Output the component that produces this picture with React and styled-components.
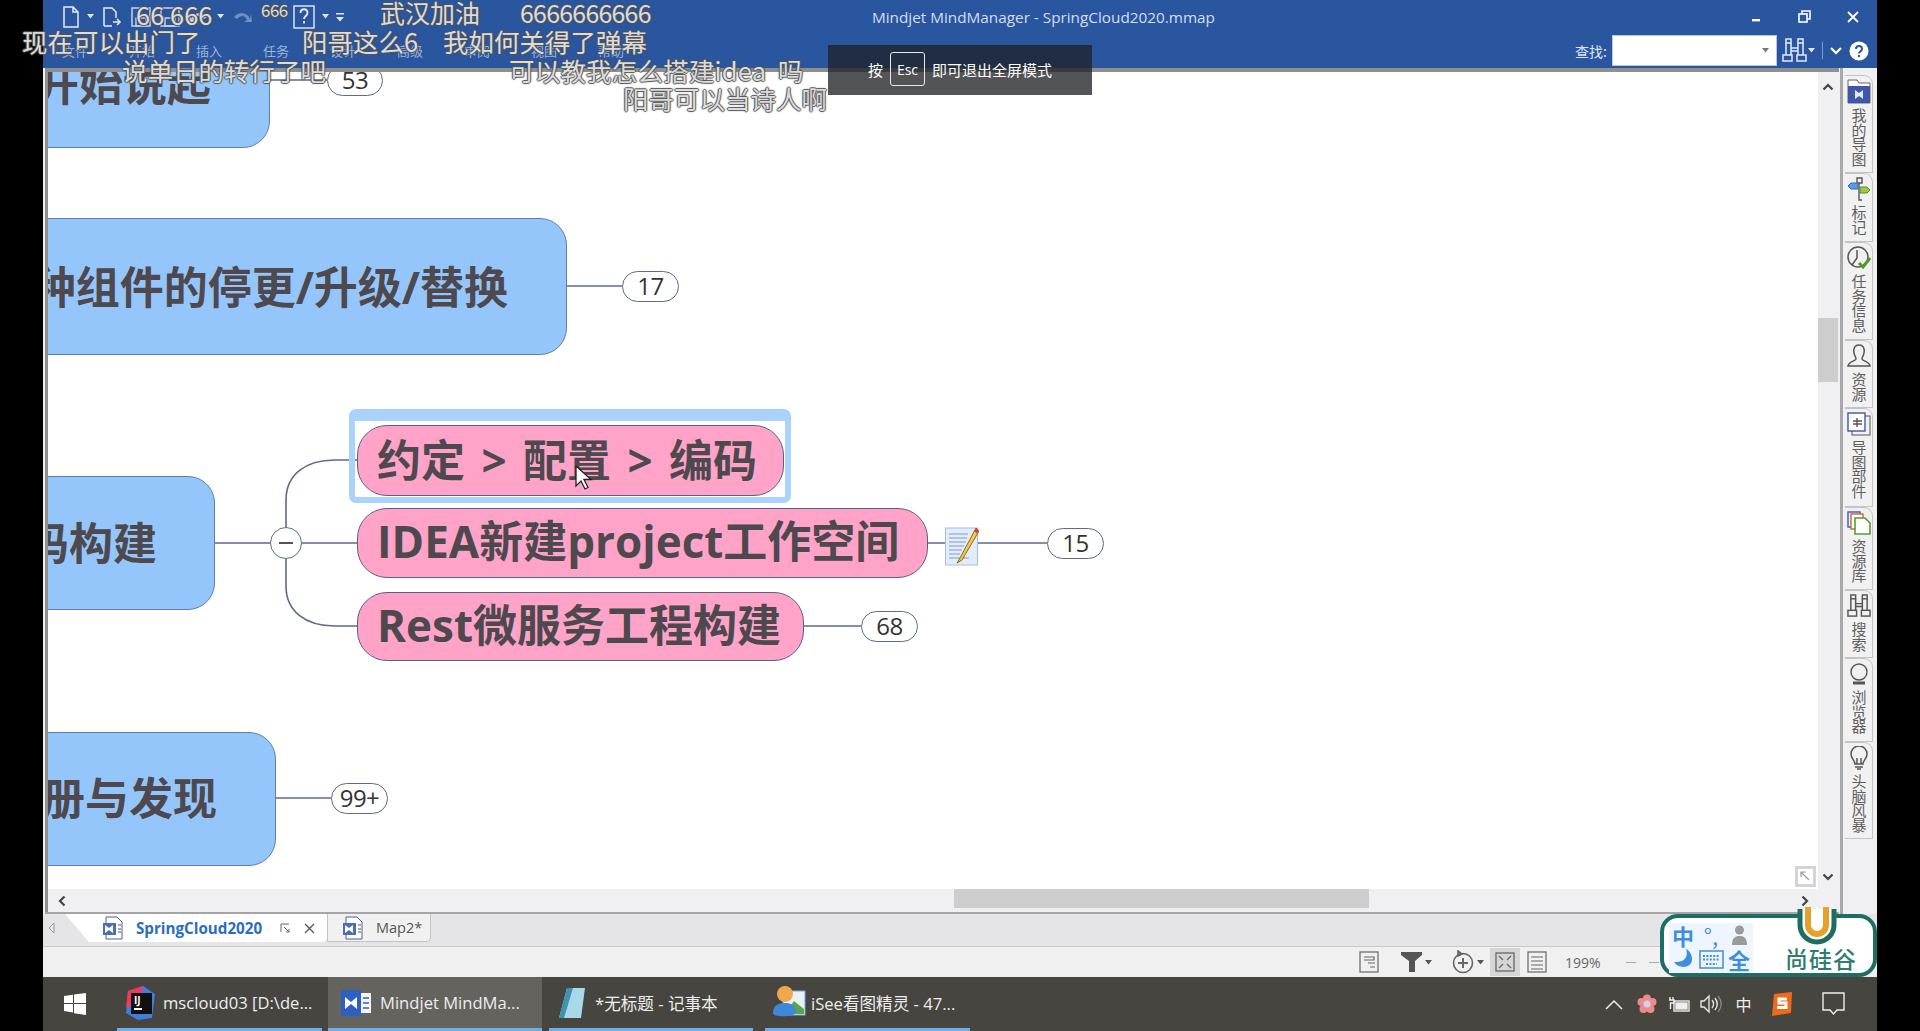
import React from "react";
import styled, { createGlobalStyle } from "styled-components";

const CJK = `"Noto Sans CJK SC", "Open Sans", sans-serif`;
const LATIN = `"Open Sans", "Noto Sans CJK SC", sans-serif`;

// the canvas starts here on the page, the map data below is in page pixels
const OX = 48;
const OY = 72;

const GlobalStyle = createGlobalStyle`
  html, body { margin: 0; padding: 0; background: #000; overflow: hidden; }
  * { box-sizing: border-box; }
`;

const Page = styled.div`
  position: relative;
  width: 1920px;
  height: 1031px;
  background: #000;
  padding-left: 43px;
  overflow: hidden;
  font-family: ${LATIN};
`;

const Window = styled.div`
  width: 1834px;
  height: 1031px;
  display: flex;
  flex-direction: column;
  background: #f0f0f2;
`;

const Spacer = styled.span`
  flex: none;
  width: ${(p) => p.$w}px;
`;

/* ---------- title bar ---------- */
const TitleBar = styled.header`
  height: 68px;
  flex: none;
  background: #2a569f;
  color: #dfe7f3;
`;
const TitleRow = styled.div`
  height: 33px;
  display: grid;
  grid-template-columns: 829px 1fr auto;
  align-items: center;
`;
const QuickBar = styled.div`
  display: flex;
  align-items: center;
  gap: 7px;
  padding-left: 19px;
`;
const Title = styled.div`
  font-size: 15.3px;
  color: #d3def0;
  white-space: nowrap;
`;
const WinControls = styled.div`
  display: flex;
  align-items: center;
  gap: 36px;
  padding-right: 18px;
`;
const RibbonRow = styled.div`
  height: 35px;
  display: flex;
  align-items: center;
  justify-content: space-between;
  padding: 0 8px 0 19px;
`;
const RibbonTabs = styled.nav`
  display: flex;
  gap: 40px;
`;
const RibbonTab = styled.span`
  width: 27px;
  font: 13px ${CJK};
  white-space: nowrap;
  color: #9db4d8;
`;
const SearchArea = styled.div`
  display: flex;
  align-items: center;
  gap: 5px;
`;
const SearchLabel = styled.span`
  font: 14px ${CJK};
  color: #dfe7f3;
`;
const SearchBox = styled.div`
  width: 165px;
  height: 31px;
  background: #fff;
  border: 1px solid #b9c8df;
  display: flex;
  align-items: center;
  justify-content: flex-end;
  padding-right: 7px;
`;
const SearchTools = styled.div`
  display: flex;
  align-items: center;
  gap: 7px;
`;
const FindGroup = styled.div`
  display: flex;
  align-items: center;
  gap: 1px;
`;
const Divider = styled.span`
  width: 1px;
  height: 17px;
  background: #7f9ac6;
`;

/* ---------- main area ---------- */
const Main = styled.div`
  flex: 1;
  min-height: 0;
  display: flex;
`;
const Workspace = styled.div`
  flex: 1;
  min-width: 0;
  display: flex;
  flex-direction: column;
  margin-left: 2px;
  border-top: 4px solid #8f8f8f;
  border-bottom: 2px solid #a5a5a5;
`;
const WorkRow = styled.div`
  flex: 1;
  min-height: 0;
  display: flex;
`;
const Canvas = styled.div`
  position: relative;
  width: 1773px;
  overflow: hidden;
  background: #fff;
  border-left: 3px solid #8f8f8f;
  font-family: ${CJK};
`;
const Links = styled.svg`
  position: absolute;
  left: 0;
  top: 0;
`;
const MapNode = styled.div`
  position: absolute;
  left: ${(p) => p.$x - OX}px;
  top: ${(p) => p.$y - OY}px;
  width: ${(p) => p.$w}px;
  height: ${(p) => p.$h}px;
  display: flex;
  align-items: center;
  white-space: nowrap;
  font-family: ${LATIN};
  font-weight: 700;
  font-size: 44px;
  color: #4e494e;
  justify-content: ${(p) => (p.$pink ? "flex-start" : "flex-end")};
  padding: ${(p) => (p.$pink ? "0 0 0 19px" : `0 ${p.$pad}px 0 0`)};
  background: ${(p) => (p.$pink ? "#ffa3c9" : "#94c6fc")};
  border: 1.5px solid ${(p) => (p.$pink ? "#5d5f88" : "#5d7fb0")};
  border-radius: ${(p) => (p.$pink ? "30px" : "27px")};
`;
const NodeText = styled.span`
  word-spacing: ${(p) => p.$ws || 0}px;
  position: relative;
  top: ${(p) => p.$top || 0}px;
`;
const Selection = styled.div`
  position: absolute;
  left: ${349 - OX}px;
  top: ${409 - OY}px;
  width: 442px;
  height: 94px;
  border: 6px solid #a9d3fb;
  border-top-width: 12px;
  border-radius: 7px;
`;
const CountPill = styled.div`
  position: absolute;
  left: ${(p) => p.$x - OX}px;
  top: ${(p) => p.$y - OY}px;
  width: ${(p) => p.$w}px;
  height: 31px;
  display: flex;
  align-items: center;
  justify-content: center;
  padding-bottom: 2px;
  background: #fff;
  border: 1.5px solid #5d6a8c;
  border-radius: 16px;
  font: 24px "Open Sans", sans-serif;
  letter-spacing: -0.5px;
  color: #333;
`;
const Collapse = styled.div`
  position: absolute;
  left: ${270 - OX}px;
  top: ${527 - OY}px;
  width: 32px;
  height: 32px;
  border-radius: 50%;
  background: #fff;
  border: 1.5px solid #5d6a8c;
  display: flex;
  align-items: center;
  justify-content: center;
  &::before {
    content: "";
    width: 14px;
    height: 2px;
    background: #555;
  }
`;
const CanvasIcon = styled.div`
  position: absolute;
  left: ${(p) => p.$x - OX}px;
  top: ${(p) => p.$y - OY}px;
  line-height: 0;
`;
const VScroll = styled.div`
  width: 20px;
  display: flex;
  flex-direction: column;
  align-items: center;
  justify-content: space-between;
  padding: 9px 0 6px;
  position: relative;
`;
const VThumb = styled.div`
  position: absolute;
  left: 0;
  top: 246px;
  width: 20px;
  height: 64px;
  background: #cdcdcd;
`;
const CornerBox = styled.div`
  position: absolute;
  left: ${1795 - OX}px;
  top: ${866 - OY}px;
  width: 21px;
  height: 21px;
  background: #fff;
  border: 3px solid #d4d4d4;
  display: flex;
  align-items: center;
  justify-content: center;
`;
const HScroll = styled.div`
  position: relative;
  height: 23px;
  flex: none;
  display: flex;
  align-items: center;
  justify-content: space-between;
  padding: 0 28px 0 8px;
  border-left: 3px solid #8f8f8f;
`;
const HThumb = styled.div`
  position: absolute;
  left: 906px;
  top: 0;
  width: 415px;
  height: 19px;
  background: #cdcdcd;
`;
const ArrowSvg = styled.svg`
  transform: rotate(${(p) => p.$turn}deg);
`;

/* ---------- right hand panel tabs ---------- */
const Sidebar = styled.aside`
  width: 37px;
  flex: none;
  border-left: 3px solid #a8a8a8;
  margin-left: 1px;
  padding: 7px 0 0 2px;
  display: flex;
  flex-direction: column;
`;
const SideTab = styled.div`
  width: 28px;
  height: ${(p) => p.$h}px;
  display: flex;
  flex-direction: column;
  align-items: center;
  gap: 4px;
  padding-top: 3px;
  border: 1px solid #c4c4c4;
  border-left: none;
  border-top-right-radius: 9px;
  background: #f1f1f2;
`;
const SideLabel = styled.span`
  writing-mode: vertical-rl;
  text-orientation: upright;
  font: 15px/18px ${CJK};
  letter-spacing: -0.5px;
  color: #5f5f5f;
`;

/* ---------- document tabs and status bar ---------- */
const DocTabs = styled.div`
  height: 33px;
  flex: none;
  display: flex;
  align-items: flex-start;
  background: #e5e5e7;
  border-bottom: 1px solid #c9c9c9;
  padding-left: 5px;
`;
const TabArrow = styled.div`
  width: 17px;
  height: 27px;
  display: flex;
  align-items: center;
`;
const DocTab = styled.div`
  display: flex;
  align-items: center;
  height: 28px;
  width: ${(p) => p.$w}px;
  padding-left: ${(p) => p.$pad}px;
  gap: 12px;
  background: ${(p) => (p.$active ? "#fff" : "#f1f1f1")};
  border: ${(p) => (p.$active ? "none" : "1px solid #c4c4c4")};
  border-top: none;
  border-bottom-right-radius: 5px;
  clip-path: ${(p) => (p.$active ? "polygon(0 0, 100% 0, 100% 100%, 24px 100%)" : "none")};
`;
const DocName = styled.span`
  font-size: ${(p) => (p.$active ? 15.2 : 14.5)}px;
  font-weight: ${(p) => (p.$active ? 700 : 400)};
  color: ${(p) => (p.$active ? "#2b6cc4" : "#555")};
  white-space: nowrap;
`;
const TabActions = styled.div`
  display: flex;
  align-items: center;
  gap: 14px;
  margin-left: 6px;
`;
const StatusBar = styled.div`
  height: 30px;
  flex: none;
  display: flex;
  align-items: center;
  background: #f0f0f0;
  padding-left: 1316px;
  gap: 3px;
`;
const StatusButton = styled.div`
  height: 28px;
  width: ${(p) => p.$w || 30}px;
  display: flex;
  align-items: center;
  justify-content: center;
  background: ${(p) => (p.$on ? "#d6d6d6" : "transparent")};
`;
const ZoomLevel = styled.span`
  font-size: 14px;
  color: #666;
  margin-left: 15px;
`;
const ZoomDash = styled.span`
  width: 10px;
  height: 1px;
  background: #aaa;
  margin-left: ${(p) => p.$ml}px;
`;

/* ---------- windows taskbar ---------- */
const Taskbar = styled.footer`
  height: 54px;
  flex: none;
  display: flex;
  align-items: stretch;
  background: #46453f;
  color: #eee;
`;
const StartButton = styled.div`
  width: 64px;
  margin-right: 10px;
  display: flex;
  align-items: center;
  justify-content: center;
`;
const TaskItem = styled.div`
  width: ${(p) => p.$w}px;
  margin-right: ${(p) => p.$gap}px;
  display: flex;
  align-items: center;
  gap: ${(p) => p.$iconGap}px;
  padding-left: ${(p) => p.$pad}px;
  background: ${(p) => (p.$active ? "#64635d" : "transparent")};
  border-bottom: 3px solid #6db0e6;
  font: 16.6px ${LATIN};
  white-space: nowrap;
`;
const Tray = styled.div`
  margin-left: auto;
  display: flex;
  align-items: center;
  padding-right: 15px;
  font: 16px ${CJK};
`;
const TraySlot = styled.div`
  width: ${(p) => p.$w}px;
  display: flex;
  align-items: center;
  justify-content: center;
`;

/* ---------- overlays ---------- */
const Danmaku = styled.div`
  position: absolute;
  left: ${(p) => p.$x}px;
  top: ${(p) => p.$y}px;
  transform: translateY(-50%);
  font: ${(p) => p.$size || 25.5}px/1.2 ${CJK};
  letter-spacing: ${(p) => p.$ls || 0}px;
  white-space: pre;
  color: rgba(240, 240, 240, 0.88);
  text-shadow: 1px 0 1px #555, -1px 0 1px #555, 0 1px 1px #555, 0 -1px 1px #555;
  pointer-events: none;
`;
const EscHint = styled.div`
  position: absolute;
  left: 828px;
  top: 45px;
  width: 264px;
  height: 50px;
  background: rgba(30, 32, 38, 0.77);
  color: #fff;
  display: flex;
  align-items: center;
  gap: 7px;
  padding: 0 0 2px 40px;
  font: 15px ${CJK};
`;
const EscKey = styled.span`
  width: 35px;
  height: 34px;
  border: 1px solid #e8e8e8;
  border-radius: 3px;
  display: flex;
  align-items: center;
  justify-content: center;
  font: 14px "Open Sans", sans-serif;
`;
const Badge = styled.div`
  position: absolute;
  left: 1660px;
  top: 914px;
  width: 217px;
  height: 63px;
  background: #fff;
  border: 4px solid #1d6d63;
  border-radius: 18px;
  display: flex;
  justify-content: space-between;
  padding: 5px 16px 0 5px;
`;
const ImeGrid = styled.div`
  display: grid;
  grid-template-columns: repeat(3, 28px);
  grid-auto-rows: 24px;
  align-items: center;
  justify-items: center;
  font: 700 22px/24px ${CJK};
  color: #3e8edb;
  background: #eef5fd;
  height: 50px;
`;
const ImeMark = styled.span`
  font-weight: 400;
`;
const BrandName = styled.span`
  align-self: flex-end;
  font: 500 23px/30px ${CJK};
  letter-spacing: 1px;
  color: #2f7d6e;
`;
const BadgeClip = styled.svg`
  position: absolute;
  left: 132px;
  top: -13px;
`;

/* ---------- drawn icons ---------- */
const Caret = ({ c = "#dfe7f3" }) => (
  <svg width="7" height="5" viewBox="0 0 7 5"><path d="M0 0h7L3.5 4.5z" fill={c} /></svg>
);
const Chevron = ({ dir = "up" }) => (
  <ArrowSvg $turn={{ up: 0, right: 90, down: 180, left: 270 }[dir]} width="12" height="12" viewBox="0 0 12 12">
    <path d="M1.5 8.5 6 4l4.5 4.5" fill="none" stroke="#444" strokeWidth="2.2" />
  </ArrowSvg>
);
const NewDoc = () => (
  <svg width="18" height="22" viewBox="0 0 18 22" fill="none" stroke="#e6ecf6" strokeWidth="1.5">
    <path d="M2 1h9l5 5v15H2zM11 1v5h5" />
  </svg>
);
const OpenDoc = () => (
  <svg width="22" height="22" viewBox="0 0 22 22" fill="none" stroke="#e6ecf6" strokeWidth="1.5">
    <path d="M3 20V2h8l4 4v6M3 20h8" /><path d="M12 16h7m-3-3 3 3-3 3" />
  </svg>
);
const SaveDoc = () => (
  <svg width="22" height="22" viewBox="0 0 22 22" fill="none" stroke="#c8d4e8" strokeWidth="1.5">
    <rect x="2" y="2" width="18" height="18" /><rect x="6" y="12" width="10" height="8" />
  </svg>
);
const Undo = () => (
  <svg width="22" height="16" viewBox="0 0 22 16">
    <path d="M3 10C6 3 14 2 19 8l-3 2C12 6 8 6 6 11l3 2H1l1-8z" fill="#c8d4e8" />
  </svg>
);
const Redo = () => (
  <svg width="22" height="16" viewBox="0 0 22 16">
    <path d="M19 10C16 3 8 2 3 8l3 2c4-4 8-4 10 1l-3 2h8l-1-8z" fill="#6f8fc2" />
  </svg>
);
const HelpBox = () => (
  <svg width="22" height="24" viewBox="0 0 22 24" fill="none" stroke="#e6ecf6" strokeWidth="1.4">
    <rect x="1" y="1" width="20" height="22" />
    <path d="M7.5 8c0-5 7-5 7 0 0 3-3.5 3-3.5 6M11 16v2.5" strokeWidth="1.8" />
  </svg>
);
const Overflow = () => (
  <svg width="8" height="10" viewBox="0 0 8 10"><path d="M0 1h8v1.4H0zM0 5h8L4 9.5z" fill="#dfe7f3" /></svg>
);
const Binoculars = ({ c = "#e6ecf6", w = 25 }) => (
  <svg width={w} height={w} viewBox="0 0 25 25" fill="none" stroke={c} strokeWidth="1.5">
    <rect x="4" y="1" width="5" height="4" /><rect x="16" y="1" width="5" height="4" />
    <path d="M4 5v12M9 5v12M16 5v12M21 5v12M9 10h7M9 13h7" />
    <rect x="1" y="17" width="9" height="6" /><rect x="15" y="17" width="9" height="6" />
  </svg>
);
const WinMin = () => <svg width="12" height="12" viewBox="0 0 12 12"><rect x="2" y="8" width="8" height="2.4" fill="#fff" /></svg>;
const WinRestore = () => (
  <svg width="13" height="13" viewBox="0 0 13 13" fill="none" stroke="#fff" strokeWidth="1.6">
    <rect x="1" y="4" width="8" height="8" /><path d="M4 4V1h8v8H9" />
  </svg>
);
const WinClose = () => (
  <svg width="12" height="12" viewBox="0 0 12 12" stroke="#fff" strokeWidth="1.8"><path d="m1 1 10 10M11 1 1 11" /></svg>
);
const HelpDot = () => (
  <svg width="20" height="20" viewBox="0 0 20 20">
    <circle cx="10" cy="10" r="9.5" fill="#fff" />
    <path d="M7 8c0-4 6-4 6 0 0 2.4-3 2.4-3 4.6" fill="none" stroke="#2a569f" strokeWidth="2" />
    <rect x="9" y="14" width="2" height="2" fill="#2a569f" />
  </svg>
);
const NoteIcon = () => (
  <svg width="34" height="41" viewBox="0 0 34 41">
    <rect x="0.5" y="3" width="32" height="37" fill="#e2ecf8" stroke="#a8bfdc" />
    <path d="M4 9h19M4 13h18M4 17h17M4 21h15M4 25h13M4 29h11M4 33h20" stroke="#7f9cc6" strokeWidth="1" />
    <path d="M31 3 15 33l-3 5 5-3L34 6z" fill="#f5c84c" stroke="#8a6a20" strokeWidth="1" />
    <path d="M31 3l3 3 -1.5 2.5-3.4-2z" fill="#d5473d" />
  </svg>
);
const Cursor = () => (
  <svg width="18" height="25" viewBox="0 0 18 25">
    <path d="M1 1v20l5-5 4 8 3-1.5-4-8h7z" fill="#fff" stroke="#222" strokeWidth="1.3" />
  </svg>
);
const MyMapsIcon = () => (
  <svg width="24" height="25" viewBox="0 0 24 25">
    <path d="M1 24V1h9l2 3h11v20z" fill="#fff" stroke="#666" />
    <rect x="1" y="7" width="22" height="17" fill="#3f57a6" />
    <path d="M8 11l4 3 4-3v9l-4-3-4 3z" fill="#dfe7f8" />
  </svg>
);
const MarkerIcon = () => (
  <svg width="24" height="24" viewBox="0 0 24 24">
    <path d="M10 1h5v5h-5zM12 6v17h3" fill="none" stroke="#555" strokeWidth="1.4" />
    <path d="M1 9l3-3h7v6H4z" fill="#5b9be0" stroke="#2b6cc4" />
    <path d="M23 13l-3-3h-7v6h7z" fill="#9cc94c" stroke="#5c8f1e" />
  </svg>
);
const ClockIcon = () => (
  <svg width="24" height="24" viewBox="0 0 24 24" fill="none">
    <circle cx="11" cy="11" r="10" stroke="#555" strokeWidth="1.5" />
    <path d="M10 4v8L5 19" stroke="#555" strokeWidth="1.5" />
    <path d="M12 17l4 4 7-9" stroke="#4e9b2a" strokeWidth="3" />
  </svg>
);
const PersonIcon = () => (
  <svg width="24" height="24" viewBox="0 0 24 24" fill="none" stroke="#555" strokeWidth="1.5">
    <path d="M12 1c-4 0-6 3-5 8 .5 3 2 4 2 6 0 2-7 2-8 7h22c-1-5-8-5-8-7 0-2 1.500-3 2-6 1-5-1-8-5-8z" />
  </svg>
);
const PartsIcon = () => (
  <svg width="24" height="24" viewBox="0 0 24 24" fill="none">
    <rect x="5" y="4" width="18" height="19" stroke="#555" />
    <rect x="1" y="1" width="17" height="18" fill="#fff" stroke="#3f57a6" strokeWidth="1.4" />
    <path d="M6 9h9M6 12h9M10 6v9" stroke="#555" strokeWidth="1.4" />
  </svg>
);
const LibraryIcon = () => (
  <svg width="24" height="24" viewBox="0 0 24 24" fill="none">
    <rect x="1" y="1" width="12" height="15" stroke="#2b5fb8" strokeWidth="1.4" />
    <rect x="4" y="3" width="12" height="15" fill="#fff" stroke="#d5603a" strokeWidth="1.4" />
    <path d="M8 7h10l5 5v11H8z" fill="#fff" stroke="#5c9b2e" strokeWidth="1.6" />
  </svg>
);
const BrowserIcon = () => (
  <svg width="24" height="24" viewBox="0 0 24 24" fill="none" stroke="#555" strokeWidth="1.4">
    <circle cx="12" cy="10" r="8" /><path d="M6 21h12" strokeWidth="3" />
  </svg>
);
const BulbIcon = () => (
  <svg width="24" height="24" viewBox="0 0 24 24" fill="none" stroke="#555" strokeWidth="1.5">
    <path d="M8 18c0-4-4-5-4-10a8 8 0 0 1 16 0c0 5-4 6-4 10z" /><path d="M8 21h8M10 23h4M10 18v-6M14 18v-6" />
  </svg>
);
const MapFile = () => (
  <svg width="22" height="24" viewBox="0 0 22 24">
    <path d="M4 1h11l5 5v17H4z" fill="#fff" stroke="#4a5f92" />
    <rect x="1" y="7" width="13" height="12" fill="#4a6fb8" />
    <path d="M3 9l4 3 4-3v8l-4-3-4 3z" fill="#fff" />
    <path d="M16 9h3M16 13h3M16 16h3" stroke="#555" />
  </svg>
);
const Popout = () => (
  <svg width="10" height="10" viewBox="0 0 10 10" fill="none" stroke="#666"><path d="M1 9V1h8M4 4l5 5M6 9h3V6" /></svg>
);
const CloseX = () => (
  <svg width="11" height="11" viewBox="0 0 11 11" stroke="#555" strokeWidth="1.3"><path d="m1 1 9 9M10 1l-9 9" /></svg>
);
const OutlineIcon = ({ filter }) => (
  <svg width="20" height="22" viewBox="0 0 20 22" fill="none" stroke="#666" strokeWidth="1.2">
    <rect x="1" y="1" width="18" height="20" />
    {filter ? <path d="M4 6h12M4 10h12M4 14h12M4 18h12" /> : <path d="M5 6h10v3H5M9 12h7M11 16h5" />}
  </svg>
);
const FilterIcon = () => (
  <svg width="21" height="20" viewBox="0 0 21 20"><path d="M0 0h21v3l-7 6v11H8V9L0 3z" fill="#555" /></svg>
);
const AddCircle = () => (
  <svg width="22" height="24" viewBox="0 0 22 24" fill="none" stroke="#666" strokeWidth="1.6">
    <circle cx="11" cy="13" r="9.500" /><path d="M11 8v10M6 13h10" strokeWidth="2" /><path d="M6 1l4 3-4 2z" fill="#666" />
  </svg>
);
const FitIcon = () => (
  <svg width="20" height="20" viewBox="0 0 20 20" fill="none" stroke="#666" strokeWidth="1.3">
    <rect x="1" y="1" width="18" height="18" /><path d="m4 4 4 4M16 4l-4 4M4 16l4-4M16 16l-4-4" />
  </svg>
);
const WinLogo = () => (
  <svg width="22" height="22" viewBox="0 0 22 22" fill="#fff">
    <path d="M0 3l9-1.300V10H0zM10 1.500 22 0v10H10zM0 11h9v8.400L0 18zM10 11h12v11l-12-1.700z" />
  </svg>
);
const IdeaIcon = () => (
  <svg width="33" height="36" viewBox="0 0 33 36">
    <path d="M3 6 18 1l12 8-3 24-14 2L1 28z" fill="#3f7fe0" />
    <path d="M3 6 18 1 14 20 1 22z" fill="#f0385f" />
    <rect x="6" y="8" width="21" height="21" fill="#111" />
    <text x="9" y="19" fill="#fff" fontSize="10" fontWeight="700" fontFamily="Open Sans">IJ</text>
    <rect x="9" y="23" width="8" height="2" fill="#fff" />
  </svg>
);
const MindIcon = () => (
  <svg width="31" height="30" viewBox="0 0 31 30">
    <rect x="0" y="2" width="20" height="26" fill="#2f5fc0" />
    <path d="M4 9l6 5 6-5v12l-6-5-6 5z" fill="#fff" />
    <rect x="20" y="5" width="10" height="20" fill="#f4f4f4" />
    <path d="M22 10h6M22 15h6M22 20h6" stroke="#2f5fc0" strokeWidth="1.500" />
  </svg>
);
const NotepadIcon = () => (
  <svg width="28" height="32" viewBox="0 0 28 32">
    <path d="M9 1h18l-4 30H1z" fill="#a9d8e8" />
    <path d="M9 1h6L6 31H1z" fill="#3f93ad" />
  </svg>
);
const PhotoIcon = () => (
  <svg width="33" height="36" viewBox="0 0 33 36">
    <rect x="10" y="6" width="22" height="24" fill="#e8f1fb" stroke="#7fa8d5" />
    <path d="M13 27l8-11 10 8v5H13z" fill="#57a845" />
    <circle cx="12" cy="9" r="8" fill="#f0a84c" />
    <path d="M0 28c0-8 6-10 12-10s11 2 11 9c0 5-23 6-23 1z" fill="#3f87d8" />
  </svg>
);
const Flower = () => (
  <svg width="20" height="20" viewBox="0 0 20 20">
    <g fill="#f08a8a">
      <circle cx="10" cy="4.500" r="4" /><circle cx="15.500" cy="8" r="4" /><circle cx="13.500" cy="15" r="4" />
      <circle cx="6.500" cy="15" r="4" /><circle cx="4.500" cy="8" r="4" />
    </g>
    <circle cx="10" cy="10" r="3.500" fill="#c9d6ef" />
  </svg>
);
const PowerIcon = () => (
  <svg width="23" height="17" viewBox="0 0 23 17" fill="none" stroke="#eee" strokeWidth="1.4">
    <rect x="6" y="5" width="15" height="10" /><rect x="8" y="7" width="11" height="6" fill="#eee" />
    <path d="M2 1v3M5 1v3M1 4h5v3H2.500v6" />
  </svg>
);
const Speaker = () => (
  <svg width="23" height="20" viewBox="0 0 23 20" fill="none" stroke="#eee" strokeWidth="1.300">
    <path d="M1 7h3l5-5v16l-5-5H1z" /><path d="M12 6c2 2.500 2 5.500 0 8M15 4c3 4 3 8 0 12" /><path d="M18 2c4 5 4 11 0 16" stroke="#8a8a85" />
  </svg>
);
const SogouIcon = () => (
  <svg width="22" height="24" viewBox="0 0 22 24">
    <path d="M3 2 21 0l-1 21-19 3z" fill="#f06a1c" />
    <path d="M16 7H8v4h7v4.500H6" fill="none" stroke="#fff" strokeWidth="3" />
  </svg>
);
const Notify = () => (
  <svg width="23" height="24" viewBox="0 0 23 24" fill="none" stroke="#eee" strokeWidth="1.400">
    <path d="M1 1h21v17h-7l-3.500 4L8 18H1z" />
  </svg>
);
const TrayUp = () => (
  <svg width="18" height="11" viewBox="0 0 18 11" fill="none" stroke="#eee" strokeWidth="1.500"><path d="m1 10 8-8 8 8" /></svg>
);
const Moon = () => (
  <svg width="20" height="22" viewBox="0 0 20 22"><path d="M13 1c3 8-2 14-12 13 4 7 18 7 18-3 0-4-2-8-6-10z" fill="#3e8edb" /></svg>
);
const Keys = () => (
  <svg width="25" height="19" viewBox="0 0 25 19" fill="none" stroke="#3e8edb" strokeWidth="1.500">
    <rect x="1" y="1" width="23" height="17" />
    <path d="M4 6h17M4 9.500h17M7 14h11" strokeDasharray="2 1.400" strokeWidth="2" />
  </svg>
);
const ImePerson = () => (
  <svg width="15" height="20" viewBox="0 0 15 20" fill="#9a9a9a">
    <circle cx="7.500" cy="5" r="4.500" /><path d="M0 20c0-7 3-9 7.500-9S15 13 15 20z" />
  </svg>
);

const PANEL_TABS = [
  { label: "我的导图", h: 98, icon: <MyMapsIcon /> },
  { label: "标记", h: 69, icon: <MarkerIcon /> },
  { label: "任务信息", h: 98, icon: <ClockIcon /> },
  { label: "资源", h: 68, icon: <PersonIcon /> },
  { label: "导图部件", h: 99, icon: <PartsIcon /> },
  { label: "资源库", h: 83, icon: <LibraryIcon /> },
  { label: "搜索", h: 68, icon: <Binoculars c="#555" w={24} /> },
  { label: "浏览器", h: 84, icon: <BrowserIcon /> },
  { label: "头脑风暴", h: 97, icon: <BulbIcon /> },
];

const RIBBON = ["文件", "开始", "插入", "任务", "设计", "高级", "审阅", "视图", "帮助"];

const PILLS = [
  { x: 327, y: 65, w: 56, n: "53" },
  { x: 622, y: 271, w: 57, n: "17" },
  { x: 1047, y: 528, w: 57, n: "15" },
  { x: 861, y: 611, w: 57, n: "68" },
  { x: 331, y: 783, w: 57, n: "99+" },
];

const DANMAKU = [
  { x: 136, y: 14, text: "66 666", size: 25.5, ls: 0 },
  { x: 261, y: 10, text: "666", size: 17, ls: -0.5 },
  { x: 380, y: 12, text: "武汉加油", size: 25 },
  { x: 520, y: 12, text: "6666666666", size: 25, ls: -0.8 },
  { x: 22, y: 41, text: "现在可以出门了" },
  { x: 302, y: 41, text: "阳哥这么6" },
  { x: 443, y: 41, text: "我如何关得了弹幕" },
  { x: 122, y: 70, text: "说单日的转行了吧" },
  { x: 509, y: 70, text: "可以教我怎么搭建idea  吗", ls: 0.2 },
  { x: 623, y: 98, text: "阳哥可以当诗人啊" },
];

export default function App() {
  return (
    <Page>
      <GlobalStyle />
      <Window>
        <TitleBar>
          <TitleRow>
            <QuickBar>
              <NewDoc /><Caret />
              <OpenDoc />
              <SaveDoc />
              <SaveDoc />
              <Undo /><Caret />
              <Redo />
              <Spacer $w={26} />
              <HelpBox /><Caret />
              <Overflow />
            </QuickBar>
            <Title>Mindjet MindManager - SpringCloud2020.mmap</Title>
            <WinControls>
              <WinMin /><WinRestore /><WinClose />
            </WinControls>
          </TitleRow>
          <RibbonRow>
            <RibbonTabs>
              {RIBBON.map((t) => <RibbonTab key={t}>{t}</RibbonTab>)}
            </RibbonTabs>
            <SearchArea>
              <SearchLabel>查找:</SearchLabel>
              <SearchBox><Caret c="#777" /></SearchBox>
              <SearchTools>
                <FindGroup><Binoculars /><Caret /></FindGroup>
                <Divider />
                <svg width="12" height="8" viewBox="0 0 12 8" fill="none" stroke="#fff" strokeWidth="2.2"><path d="m1 1 5 5 5-5" /></svg>
                <HelpDot />
              </SearchTools>
            </SearchArea>
          </RibbonRow>
        </TitleBar>

        <Main>
          <Workspace>
            <WorkRow>
              <Canvas>
                <Links width="1770" height="817" viewBox={`${OX} ${OY} 1770 817`} fill="none" stroke="#5d6a8c" strokeWidth="1.6">
                  <path d="M270 80h57" />
                  <path d="M567 286h55" />
                  <path d="M215 543h55M302 543h55" />
                  <path d="M286 527V500C286 475 305 460 335 460H357" />
                  <path d="M286 559V586C286 611 305 626 335 626H357" />
                  <path d="M928 543h17M977 543h70" />
                  <path d="M804 626h57" />
                  <path d="M276 798h55" />
                </Links>

                <MapNode $x={-60} $y={20} $w={330} $h={128} $pad={58}>
                  <NodeText $top={-2}>开始说起</NodeText>
                </MapNode>
                <MapNode $x={-60} $y={218} $w={627} $h={137} $pad={58}>
                  <NodeText $top={-2}>种组件的停更/升级/替换</NodeText>
                </MapNode>
                <MapNode $x={-60} $y={476} $w={275} $h={134} $pad={57}>
                  <NodeText $top={-2}>码构建</NodeText>
                </MapNode>
                <MapNode $x={-60} $y={732} $w={336} $h={134} $pad={58}>
                  <NodeText $top={-3}>册与发现</NodeText>
                </MapNode>

                <Selection />
                <MapNode $pink $x={357} $y={425} $w={427} $h={71}>
                  <NodeText $top={-3} $ws={5}>约定 &gt; 配置 &gt; 编码</NodeText>
                </MapNode>
                <MapNode $pink $x={357} $y={508} $w={571} $h={70}>
                  <NodeText $top={-4}>IDEA新建project工作空间</NodeText>
                </MapNode>
                <MapNode $pink $x={357} $y={592} $w={447} $h={69}>
                  <NodeText $top={-4}>Rest微服务工程构建</NodeText>
                </MapNode>

                <Collapse />
                {PILLS.map((p) => (
                  <CountPill key={p.n} $x={p.x} $y={p.y} $w={p.w}>{p.n}</CountPill>
                ))}
                <CanvasIcon $x={945} $y={525}><NoteIcon /></CanvasIcon>
                <CanvasIcon $x={575} $y={465}><Cursor /></CanvasIcon>
                <CornerBox>
                  <svg width="11" height="11" viewBox="0 0 11 11" fill="none" stroke="#999" strokeWidth="1.2"><path d="M1 6V1h5M1 1l8 8" /></svg>
                </CornerBox>
              </Canvas>
              <VScroll>
                <VThumb />
                <Chevron />
                <Chevron dir="down" />
              </VScroll>
            </WorkRow>
            <HScroll>
              <HThumb />
              <Chevron dir="left" />
              <Chevron dir="right" />
            </HScroll>
          </Workspace>
          <Sidebar>
            {PANEL_TABS.map((t) => (
              <SideTab key={t.label} $h={t.h}>
                {t.icon}
                <SideLabel>{t.label}</SideLabel>
              </SideTab>
            ))}
          </Sidebar>
        </Main>

        <DocTabs>
          <TabArrow>
            <svg width="7" height="12" viewBox="0 0 7 12" fill="none" stroke="#999"><path d="M6 1 1 6l5 5z" /></svg>
          </TabArrow>
          <DocTab $active $w={262} $pad={37}>
            <MapFile />
            <DocName $active>SpringCloud2020</DocName>
            <TabActions><Popout /><CloseX /></TabActions>
          </DocTab>
          <DocTab $w={104} $pad={14}>
            <MapFile />
            <DocName>Map2*</DocName>
          </DocTab>
        </DocTabs>

        <StatusBar>
          <StatusButton $w={20}><OutlineIcon /></StatusButton>
          <Spacer $w={16} />
          <FilterIcon /><Caret c="#555" />
          <Spacer $w={14} />
          <AddCircle /><Caret c="#555" />
          <Spacer $w={0} />
          <StatusButton $on><FitIcon /></StatusButton>
          <Spacer $w={1} />
          <StatusButton $w={20}><OutlineIcon filter /></StatusButton>
          <ZoomLevel>199%</ZoomLevel>
          <ZoomDash $ml={22} />
          <ZoomDash $ml={10} />
        </StatusBar>

        <Taskbar>
          <StartButton><WinLogo /></StartButton>
          <TaskItem $w={205} $gap={6} $pad={8} $iconGap={5}><IdeaIcon />mscloud03 [D:\de...</TaskItem>
          <TaskItem $active $w={214} $gap={7} $pad={13} $iconGap={8}><MindIcon />Mindjet MindMa...</TaskItem>
          <TaskItem $w={204} $gap={12} $pad={9} $iconGap={9}><NotepadIcon />*无标题 - 记事本</TaskItem>
          <TaskItem $w={205} $gap={0} $pad={8} $iconGap={5}><PhotoIcon />iSee看图精灵 - 47...</TaskItem>
          <Tray>
            <TraySlot $w={33}><TrayUp /></TraySlot>
            <TraySlot $w={33}><Flower /></TraySlot>
            <TraySlot $w={32}><PowerIcon /></TraySlot>
            <TraySlot $w={32}><Speaker /></TraySlot>
            <TraySlot $w={33}>中</TraySlot>
            <TraySlot $w={44}><SogouIcon /></TraySlot>
            <TraySlot $w={58}><Notify /></TraySlot>
          </Tray>
        </Taskbar>
      </Window>

      {DANMAKU.map((d) => (
        <Danmaku key={d.text} $x={d.x} $y={d.y} $size={d.size} $ls={d.ls}>{d.text}</Danmaku>
      ))}

      <EscHint>
        按<EscKey>Esc</EscKey>即可退出全屏模式
      </EscHint>

      <Badge>
        <ImeGrid>
          <span>中</span>
          <ImeMark>°,</ImeMark>
          <ImePerson />
          <Moon />
          <Keys />
          <span>全</span>
        </ImeGrid>
        <BrandName>尚硅谷</BrandName>
        <BadgeClip width="42" height="44" viewBox="0 0 42 44" fill="none">
          <path d="M4 4v16a17 17 0 0 0 34 0V4" stroke="#1d6d63" strokeWidth="5" fill="#fff" />
          <path d="M12 2v18a9 9 0 0 0 18 0V2" stroke="#e6a02c" strokeWidth="6" />
          <path d="M21 2v20" stroke="#fff" strokeWidth="2" />
        </BadgeClip>
      </Badge>
    </Page>
  );
}
